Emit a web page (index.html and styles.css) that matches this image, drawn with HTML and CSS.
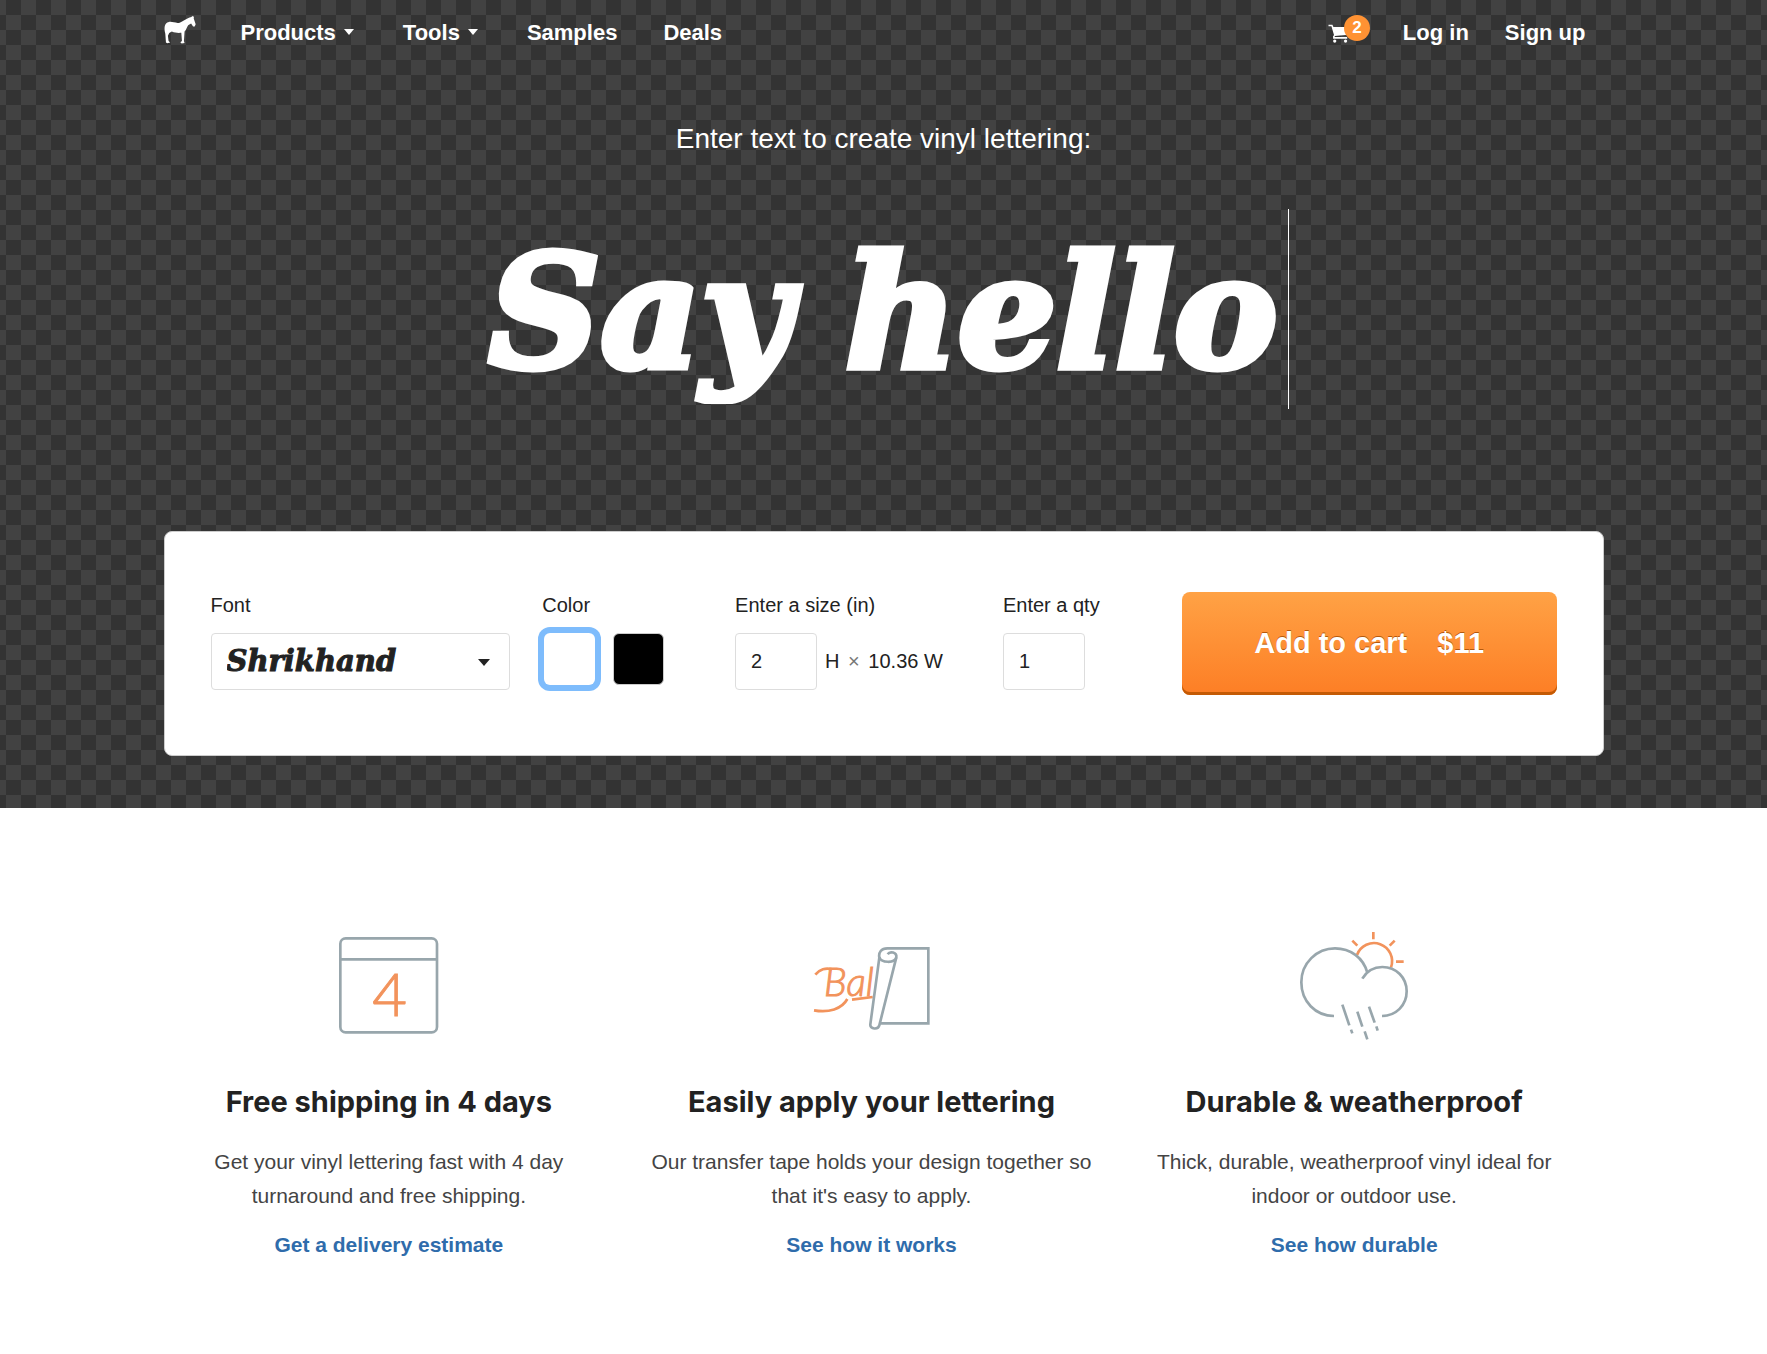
FILE: index.html
```
<!DOCTYPE html>
<html lang="en">
<head>
    <meta charset="UTF-8">
    <meta name="viewport" content="width=device-width, initial-scale=1">
    <title>Vinyl Lettering</title>
    <link rel="stylesheet" href="styles.css">
</head>
<body>
    <div class="hero">
        <header class="container nav">
            <a class="logo" href="#" aria-label="Home">
                <svg width="32" height="29" viewBox="488 44 98 86" fill="#fff">
                    <path d="M572 49L575 45L577 49L580 46L579 53L585 71L582 78L577 78L571 69L562 74C558 80 557 87 551 93L550 108L549 122L551 128L542 130L538 126L543 122L541 97C530 98 522 97 512 93L504 98L500 106L502 122L507 127L498 129L494 127L492 100C488 85 488 66 503 64C514 62 524 69 536 66C549 62 556 53 572 49Z"/>
                </svg>
            </a>
            <nav class="nav-links">
                <a class="has-menu" href="#">Products</a>
                <a class="has-menu" href="#">Tools</a>
                <a href="#">Samples</a>
                <a href="#">Deals</a>
            </nav>
            <nav class="nav-account">
                <a class="cart" href="#" aria-label="Cart">
                    <svg width="20" height="19" viewBox="84 68 60 58" fill="#fff">
                        <path d="M85 70h12l3 7h44v24l-40 4v3h38v5H99v-8l3-3-8-27h-9z"/>
                        <circle cx="104" cy="120" r="5"/>
                        <circle cx="137" cy="120" r="5"/>
                    </svg>
                    <span class="badge">2</span>
                </a>
                <a href="#">Log in</a>
                <a href="#">Sign up</a>
            </nav>
        </header>

        <div class="container lettering">
            <label class="lettering-label" for="lettering">Enter text to create vinyl lettering:</label>
            <input class="lettering-input" type="text" id="lettering" value="Say hello" spellcheck="false">
        </div>

        <form class="container options">
            <div class="field">
                <label for="font">Font</label>
                <div class="select">
                    <select id="font">
                        <option>Shrikhand</option>
                    </select>
                </div>
            </div>
            <fieldset class="field">
                <legend>Color</legend>
                <div class="swatches">
                    <input class="swatch swatch-white" type="radio" name="color" aria-label="White" checked>
                    <input class="swatch swatch-black" type="radio" name="color" aria-label="Black">
                </div>
            </fieldset>
            <div class="field">
                <label for="size">Enter a size (in)</label>
                <div class="size">
                    <input class="box" type="text" id="size" value="2">
                    <span>H <span class="times">×</span> 10.36 W</span>
                </div>
            </div>
            <div class="field">
                <label for="qty">Enter a qty</label>
                <input class="box" type="text" id="qty" value="1">
            </div>
            <button class="add" type="button"><span>Add to cart</span><span>$11</span></button>
        </form>
    </div>

    <main class="container features">
        <section class="feature">
            <svg width="140" height="130" viewBox="0 0 420 390" fill="none" stroke="#98a6ac" stroke-width="8">
                <rect x="64" y="55" width="290" height="282" rx="16"/>
                <path d="M64 118h290"/>
                <text class="day" x="212" y="289">4</text>
            </svg>
            <h2>Free shipping in 4 days</h2>
            <p>Get your vinyl lettering fast with 4 day turnaround and free shipping.</p>
            <a href="#">Get a delivery estimate</a>
        </section>
        <section class="feature">
            <svg width="140" height="130" viewBox="3 -28 420 390" fill="none" stroke="#98a6ac" stroke-width="8">
                <text class="script" x="72" y="200">Bal</text>
                <path stroke="#f2935c" d="M46 136c12-16 32-22 50-16M42 243c44 8 84-4 100-34M156 211l62-8"/>
                <path fill="#fff" d="M262 57h123v225H242M262 57c-18 0-27 12-24 28l-27 200c-2 15 24 17 27 3l51-204"/>
                <path d="M238 83c5 19 47 19 51 1 2-15-19-20-26-9"/>
            </svg>
            <h2>Easily apply your lettering</h2>
            <p>Our transfer tape holds your design together so that it's easy to apply.</p>
            <a href="#">See how it works</a>
        </section>
        <section class="feature">
            <svg width="140" height="130" viewBox="-3 2 420 390" fill="none" stroke="#98a6ac" stroke-width="8">
                <g stroke="#f2935c">
                    <path d="M216 107a54 54 0 0 1 102 37"/>
                    <path d="M265 38v22M202 64l15 15M329 64l-15 15M333 127h23"/>
                </g>
                <path d="M147 290c-56 0-98-44-98-101 0-58 46-102 101-102 46 0 85 28 97 73"/>
                <path d="M232 178c13-22 35-35 60-35 42 0 73 32 73 73 0 42-32 74-74 74"/>
                <path d="M172 256l21 62M198 331l4 11M217 277l15 45M239 336l8 24M252 262l17 48M274 321l4 13"/>
            </svg>
            <h2>Durable &amp; weatherproof</h2>
            <p>Thick, durable, weatherproof vinyl ideal for indoor or outdoor use.</p>
            <a href="#">See how durable</a>
        </section>
    </main>
</body>
</html>
```
FILE: styles.css
```
* {
    box-sizing: border-box;
}

body {
    margin: 0;
    font-family: "Liberation Sans", Arial, sans-serif;
    font-size: 20px;
    color: #222;
    background: #fff;
}

a {
    text-decoration: none;
}

input, select, button {
    font: inherit;
    color: inherit;
}

.container {
    width: 100%;
    max-width: 1440px;
    margin: 0 auto;
}

/* Hero */
.hero {
    padding-bottom: 52px;
    background: repeating-conic-gradient(#424242 0 25%, #333 0 50%) 6px 0 / 30px 30px;
}

.nav {
    display: flex;
    align-items: center;
    height: 66px;
    padding-right: 18px;
    font-size: 22px;
    font-weight: bold;
}

.nav a {
    color: #fff;
}

.logo {
    height: 37px;
    margin-right: 45px;
}

.nav-links {
    display: flex;
    gap: 46px;
}

.has-menu::after {
    content: "";
    display: inline-block;
    margin: 0 3px 0 8px;
    vertical-align: 5px;
    border: 5px solid transparent;
    border-top: 6px solid #fff;
    border-bottom: 0;
}

.nav-account {
    display: flex;
    align-items: center;
    gap: 36px;
    margin-left: auto;
}

.cart {
    position: relative;
    width: 39px;
    height: 19px;
}

.cart svg {
    display: block;
}

.badge {
    position: absolute;
    top: -9px;
    left: 16px;
    width: 26px;
    border-radius: 50%;
    background: #ff9233;
    font-size: 17px;
    line-height: 26px;
    text-align: center;
}

.lettering {
    display: flex;
    flex-direction: column;
    align-items: center;
    gap: 52px;
    padding: 55px 0 122px;
    color: #fff;
}

.lettering-label {
    font-size: 28px;
    line-height: 36px;
}

.lettering-input {
    width: 810px;
    max-width: 100%;
    height: 200px;
    padding: 7px 0 0;
    border: 0;
    border-right: 1px solid #fff;
    outline: 0;
    background: none;
    font: italic bold 155px "DejaVu Serif", serif;
    text-align: center;
    -webkit-text-stroke: 7px #fff;
}

.options {
    display: grid;
    grid-template-columns: 300fr 161fr 236fr 147fr 375fr;
    column-gap: 32px;
    padding: 60px 46px;
    border: 1px solid #ccc;
    border-radius: 8px;
    background: #fff;
}

.field {
    min-width: 0;
    margin: 0;
    padding: 0;
    border: 0;
}

.field label,
.field legend {
    display: block;
    margin-bottom: 15px;
    padding: 0;
    line-height: 26px;
}

.select {
    position: relative;
}

.select::after {
    content: "";
    position: absolute;
    top: 26px;
    right: 20px;
    border: 6px solid transparent;
    border-top: 7px solid #222;
    border-bottom: 0;
    pointer-events: none;
}

.select select,
.box {
    height: 57px;
    padding: 0 15px;
    border: 1px solid #ddd;
    border-radius: 4px;
    background: #fff;
}

.select select {
    width: 100%;
    appearance: none;
    padding-bottom: 2px;
    font: italic bold 29px "DejaVu Serif", serif;
    -webkit-text-stroke: 1px #222;
}

.box {
    width: 82px;
}

.swatches {
    display: flex;
    gap: 18px;
    padding: 0 2px;
}

.swatch {
    appearance: none;
    width: 51px;
    height: 52px;
    margin: 0;
    border: 1px solid #ccc;
    border-radius: 6px;
}

.swatch-white {
    background: #fff;
}

.swatch-black {
    background: #000;
}

.swatch:checked {
    border: 0;
    box-shadow: 0 0 0 6px #7ebcfc;
}

.size {
    display: flex;
    align-items: center;
    gap: 8px;
    white-space: nowrap;
}

.times {
    margin: 0 3px;
    color: #777;
}

.add {
    display: flex;
    align-items: center;
    justify-content: center;
    gap: 30px;
    height: 103px;
    padding: 0;
    border: 0;
    border-radius: 8px;
    background: linear-gradient(#ffa245, #fd7e25);
    box-shadow: inset 0 -3px #c45a04;
    color: #fff;
    font-size: 29px;
    font-weight: bold;
    text-shadow: 0 -1px #b4580c;
}

/* Features */
.features {
    display: grid;
    grid-template-columns: repeat(3, 1fr);
    gap: 32px;
    padding: 112px 24px 80px 0;
    text-align: center;
}

.day {
    fill: #f2935c;
    stroke: #f2935c;
    stroke-width: 3px;
    font-family: Lato, sans-serif;
    font-size: 180px;
    font-weight: 300;
    text-anchor: middle;
}

.script {
    fill: #f2935c;
    stroke: #f2935c;
    stroke-width: 3px;
    font-family: Lato, sans-serif;
    font-size: 116px;
    font-style: italic;
    font-weight: 300;
}

.feature h2 {
    margin: 27px 0 23px;
    font-family: Inter, sans-serif;
    font-size: 29px;
    font-weight: bold;
    line-height: 40px;
}

.feature p {
    max-width: 450px;
    margin: 0 auto 20px;
    color: #444;
    font-size: 21px;
    line-height: 34px;
}

.feature a {
    color: #2f6cab;
    font-size: 21px;
    font-weight: bold;
}

@media (max-width: 1100px) {
    .options,
    .features {
        grid-template-columns: 1fr;
        row-gap: 32px;
    }

    .lettering-input {
        font-size: 80px;
    }
}
```
